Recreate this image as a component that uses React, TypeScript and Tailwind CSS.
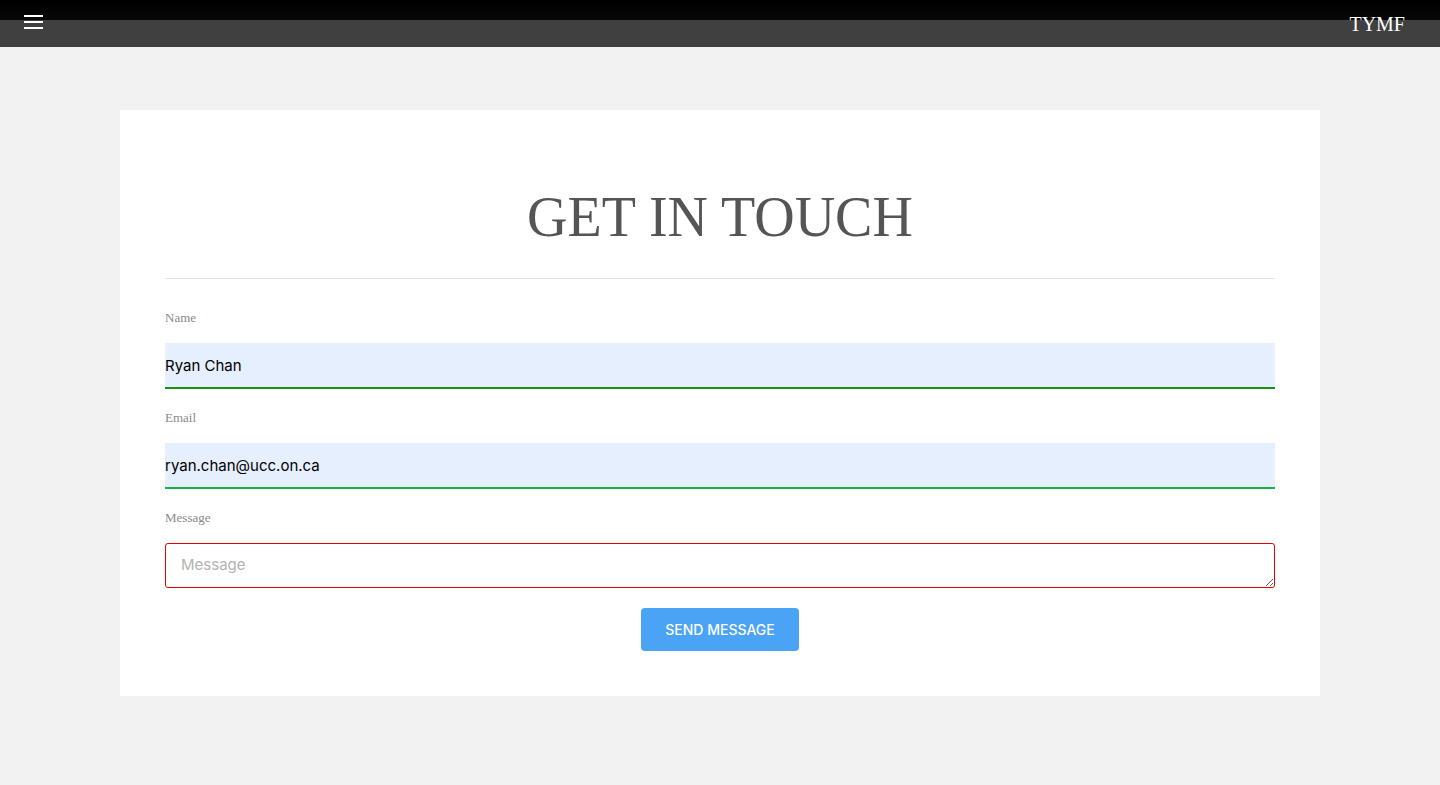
import { useState } from 'react';

export default function App() {
  const [name, setName] = useState('Ryan Chan');
  const [email, setEmail] = useState('ryan.chan@ucc.on.ca');
  const [message, setMessage] = useState('');

  return (
    <div className="min-h-[785px] bg-[#f2f2f2]">
      {/* Top bar over the hero image */}
      <header className="relative h-[47px] bg-[linear-gradient(to_bottom,#000_0px,#070707_20px,#404040_20px,#404040_47px)]">
        <div className="flex h-full items-start justify-between pl-6 pr-[35px]">
          <button className="mt-[15px] flex w-[19px] flex-col gap-[4px]">
            <span className="block h-[2px] w-full bg-white" />
            <span className="block h-[2px] w-full bg-white" />
            <span className="block h-[2px] w-full bg-white" />
          </button>
          <span className="mt-[11px] font-['Liberation_Serif',serif] text-[20px] leading-[26px] text-white">
            TYMF
          </span>
        </div>
      </header>

      {/* Contact card */}
      <main className="px-[120px] pt-[63px]">
        <div className="bg-white px-[45px] pt-[74px] pb-[45px]">
          <h1 className="text-center font-['Liberation_Serif',serif] text-[56px] leading-[66px] text-[#555555]">
            GET IN TOUCH
          </h1>
          <hr className="mt-[28px] border-0 border-t border-[#e3e3e3]" />

          <form className="flex flex-col font-['Liberation_Sans',Arial,sans-serif]" onSubmit={(e) => e.preventDefault()}>
            <label className="mt-[32px] font-['Liberation_Serif',serif] text-[13px] leading-[14px] text-[#8a8a8a]">
              Name
            </label>
            <input
              value={name}
              onChange={(e) => setName(e.target.value)}
              className="mt-[18px] h-[46px] border-0 border-b-2 border-[#179117] bg-[#e6effd] px-0 pt-[1px] font-['Inter',sans-serif] text-[15px] text-black outline-none"
            />

            <label className="mt-[22px] font-['Liberation_Serif',serif] text-[13px] leading-[14px] text-[#8a8a8a]">
              Email
            </label>
            <input
              value={email}
              onChange={(e) => setEmail(e.target.value)}
              className="mt-[18px] h-[46px] border-0 border-b-2 border-[#17b043] bg-[#e6effd] px-0 pt-[1px] font-['Inter',sans-serif] text-[15px] text-black outline-none"
            />

            <label className="mt-[22px] font-['Liberation_Serif',serif] text-[13px] leading-[14px] text-[#8a8a8a]">
              Message
            </label>
            <textarea
              value={message}
              onChange={(e) => setMessage(e.target.value)}
              placeholder="Message"
              rows={1}
              className="mt-[18px] h-[45px] rounded-[3px] border border-[#e60000] bg-white px-[15px] py-[11px] font-['Inter',sans-serif] text-[15px] leading-[20px] text-black outline-none placeholder:text-[#b3b3b3]"
            />

            <div className="mt-[20px] flex justify-center">
              <button
                type="submit"
                className="h-[43px] w-[158px] rounded-[4px] bg-[#4aa3f4] font-['Inter',sans-serif] text-[14px] font-medium text-white"
              >
                SEND MESSAGE
              </button>
            </div>
          </form>
        </div>
      </main>
    </div>
  );
}
